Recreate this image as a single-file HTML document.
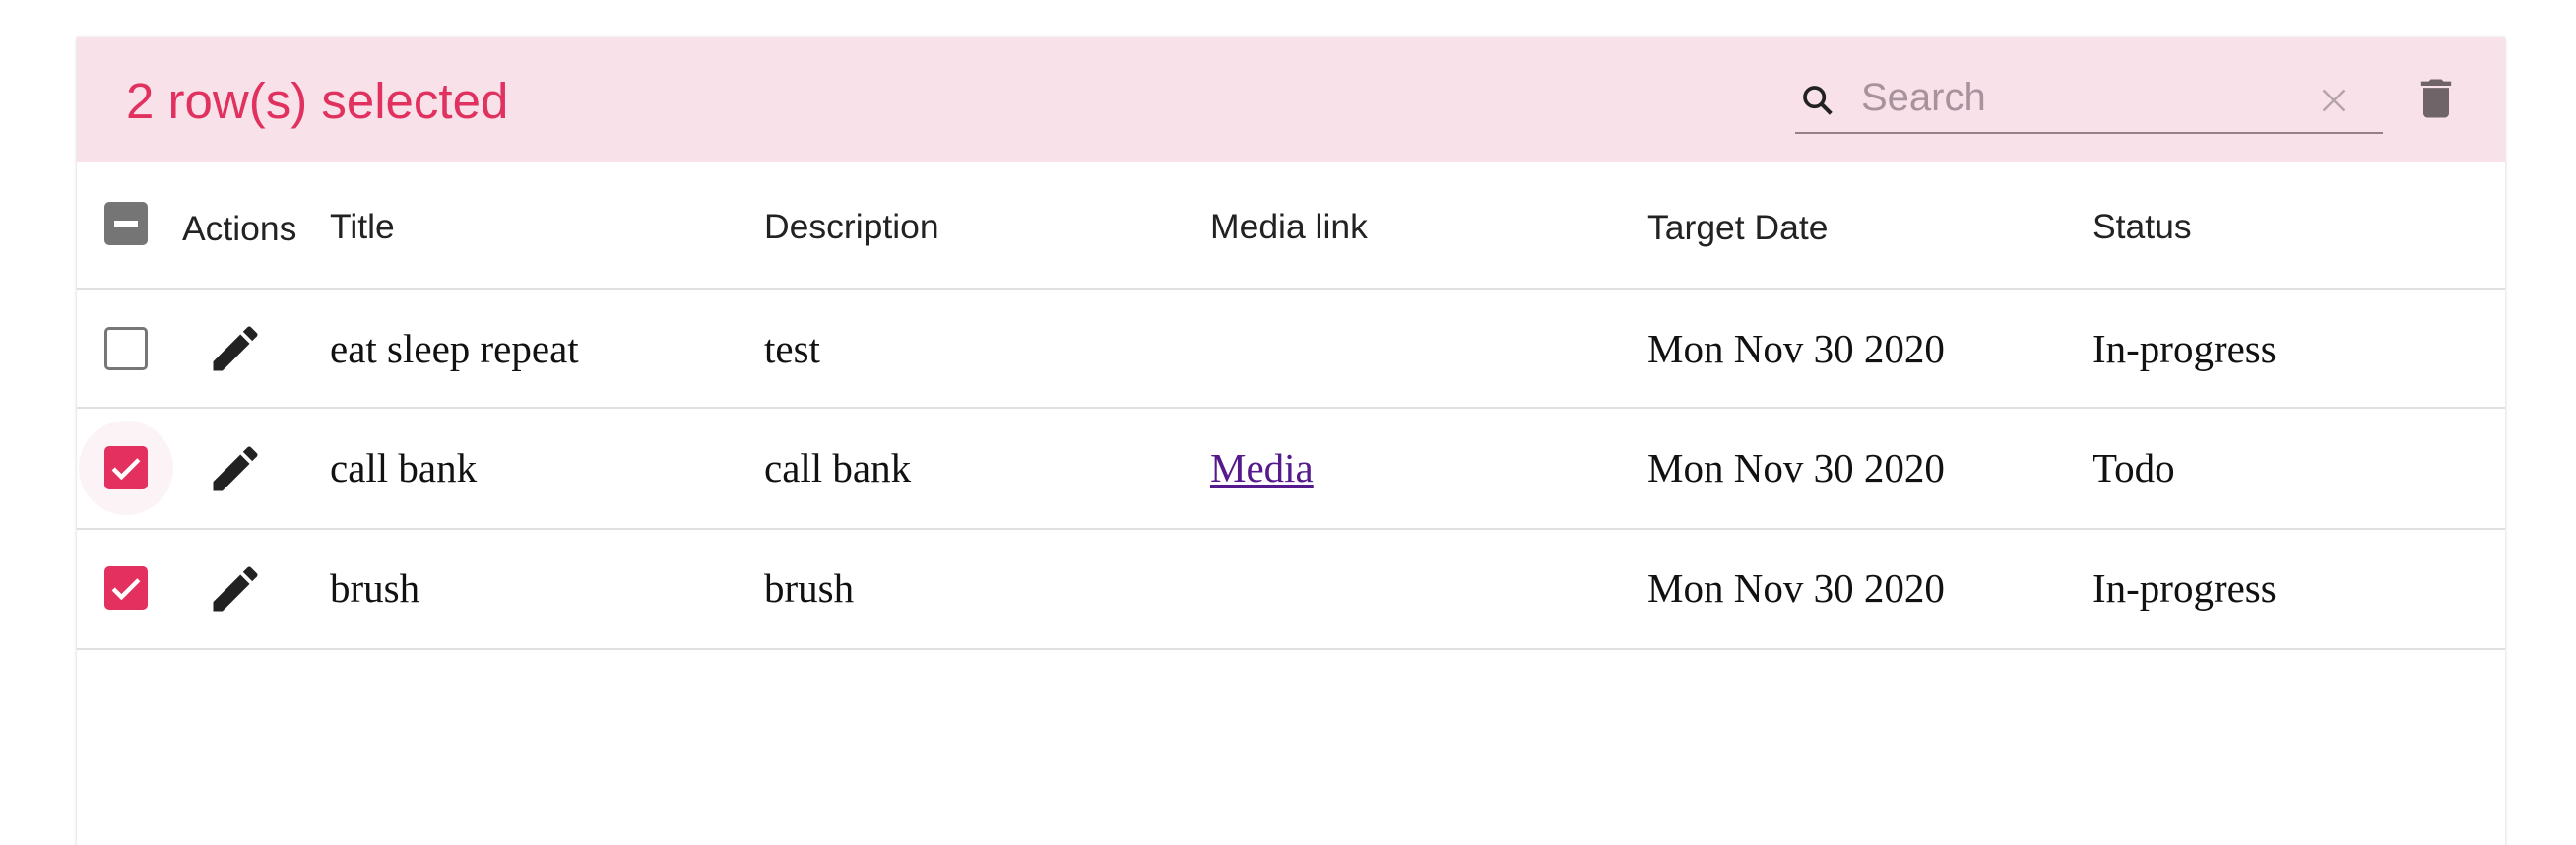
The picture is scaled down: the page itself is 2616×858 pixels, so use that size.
<!DOCTYPE html>
<html><head><style>
body{margin:0;width:2616px;height:836px;background:#fff;overflow:hidden;font-family:"Liberation Sans",sans-serif;position:relative}
.card{position:absolute;left:78px;top:38px;width:2466px;height:820px;background:#fff;box-shadow:0 2px 4px rgba(0,0,0,.12),0 0 3px rgba(0,0,0,.08)}
.bar{position:absolute;left:0;top:0;width:100%;height:127px;background:#f9e1ea}
.abs{position:absolute}
.h{font-size:35.5px;color:#222;top:210px}
.c{font-family:"Liberation Serif",serif;font-size:41px;color:#111}
.line{position:absolute;left:78px;width:2466px;height:2px;background:#e0e0e0}
.cb{position:absolute;left:106px;width:44px;height:44px;border-radius:5px}
</style></head><body>
<div class="card"><div class="bar"></div></div>
<div class="abs" style="left:128px;top:73px;font-size:51px;color:#e0315f">2 row(s) selected</div>
<svg class="abs" style="left:1826px;top:82px" width="40" height="40" viewBox="0 0 24 24"><circle cx="10" cy="10" r="5.8" fill="none" stroke="#222" stroke-width="2.2"/><path stroke="#222" stroke-width="2.4" d="M14.2 14.2L20 20"/></svg>
<div class="abs" style="left:1890px;top:77px;font-size:40px;color:#a8939c">Search</div>
<svg class="abs" style="left:2352px;top:84px" width="36" height="36" viewBox="0 0 24 24"><path stroke="#b5a3aa" stroke-width="1.6" d="M5 5L19 19M19 5L5 19"/></svg>
<div class="abs" style="left:1823px;top:134px;width:597px;height:2px;background:#948088"></div>
<svg class="abs" style="left:2448px;top:74px" width="52" height="52" viewBox="0 0 24 24"><path fill="#6f6569" d="M6 19c0 1.1.9 2 2 2h8c1.1 0 2-.9 2-2V7H6v12zM19 4h-3.5l-1-1h-5l-1 1H5v2h14V4z"/></svg>
<div class="cb" style="top:205px;background:#757575"><div style="position:absolute;left:10px;top:19px;width:24px;height:6px;background:#fff"></div></div>
<div class="abs h" style="left:185px;top:212px">Actions</div>
<div class="abs h" style="left:335px">Title</div>
<div class="abs h" style="left:776px">Description</div>
<div class="abs h" style="left:1229px">Media link</div>
<div class="abs h" style="left:1673px;top:211px">Target Date</div>
<div class="abs h" style="left:2125px">Status</div>
<div class="line" style="top:292px"></div>
<div class="line" style="top:413px"></div>
<div class="line" style="top:536px"></div>
<div class="line" style="top:658px"></div>
<div class="abs" style="left:80px;top:427px;width:96px;height:96px;border-radius:50%;background:#fcf3f6"></div>
<div class="cb" style="top:332px;width:38px;height:38px;border:3px solid #777;background:#fff"></div>
<div class="cb" style="top:453px;background:#e3305e"><svg width="44" height="44" viewBox="0 0 24 24"><path fill="none" stroke="#fff" stroke-width="2.4" d="M5 12.5l4.5 4.5L19 7.5"/></svg></div>
<div class="cb" style="top:575px;background:#e3305e"><svg width="44" height="44" viewBox="0 0 24 24"><path fill="none" stroke="#fff" stroke-width="2.4" d="M5 12.5l4.5 4.5L19 7.5"/></svg></div>
<svg class="abs" style="left:209px;top:324px" width="60" height="60" viewBox="0 0 24 24"><path fill="#222" d="M3 17.25V21h3.75L17.81 9.94l-3.75-3.75L3 17.25zM20.71 7.04a1 1 0 000-1.41l-2.34-2.34a1 1 0 00-1.41 0l-1.83 1.83 3.75 3.75 1.83-1.83z"/></svg>
<svg class="abs" style="left:209px;top:446px" width="60" height="60" viewBox="0 0 24 24"><path fill="#222" d="M3 17.25V21h3.75L17.81 9.94l-3.75-3.75L3 17.25zM20.71 7.04a1 1 0 000-1.41l-2.34-2.34a1 1 0 00-1.41 0l-1.83 1.83 3.75 3.75 1.83-1.83z"/></svg>
<svg class="abs" style="left:209px;top:568px" width="60" height="60" viewBox="0 0 24 24"><path fill="#222" d="M3 17.25V21h3.75L17.81 9.94l-3.75-3.75L3 17.25zM20.71 7.04a1 1 0 000-1.41l-2.34-2.34a1 1 0 00-1.41 0l-1.83 1.83 3.75 3.75 1.83-1.83z"/></svg>
<div class="abs c" style="left:335px;top:330px">eat sleep repeat</div>
<div class="abs c" style="left:776px;top:330px">test</div>
<div class="abs c" style="left:1673px;top:330px">Mon Nov 30 2020</div>
<div class="abs c" style="left:2125px;top:330px">In-progress</div>
<div class="abs c" style="left:335px;top:451px">call bank</div>
<div class="abs c" style="left:776px;top:451px">call bank</div>
<div class="abs c" style="left:1229px;top:451px;color:#551a8b;text-decoration:underline">Media</div>
<div class="abs c" style="left:1673px;top:451px">Mon Nov 30 2020</div>
<div class="abs c" style="left:2125px;top:451px">Todo</div>
<div class="abs c" style="left:335px;top:573px">brush</div>
<div class="abs c" style="left:776px;top:573px">brush</div>
<div class="abs c" style="left:1673px;top:573px">Mon Nov 30 2020</div>
<div class="abs c" style="left:2125px;top:573px">In-progress</div>
</body></html>
